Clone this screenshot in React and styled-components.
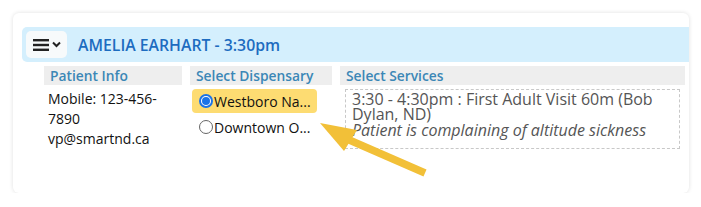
import styled, { createGlobalStyle } from "styled-components";

const GlobalStyle = createGlobalStyle`
  body {
    margin: 0;
    background: #ffffff;
    font-family: "Open Sans", "Liberation Sans", sans-serif;
  }
`;

const Card = styled.div`
  position: relative;
  box-sizing: border-box;
  margin: 13px 0 0 13px;
  width: 676px;
  height: 180px;
  padding: 14px 0 0 9px;
  background: #ffffff;
  border-radius: 6px;
  box-shadow: 0 0 4px rgba(0, 0, 0, 0.13);
`;

const HeaderBar = styled.div`
  display: flex;
  align-items: center;
  gap: 11px;
  height: 35px;
  padding-left: 4px;
  background: #d4effd;
  border-radius: 5px 0 0 5px;
`;

const MenuButton = styled.div`
  display: flex;
  align-items: center;
  justify-content: center;
  gap: 3px;
  width: 41px;
  height: 27px;
  background: #f7fafb;
  border-radius: 5px;
  color: #222;
`;

const Title = styled.div`
  font-size: 15.8px;
  font-weight: 600;
  color: #1d6cc0;
`;

const Columns = styled.div`
  display: grid;
  grid-template-columns: 138px 142px 345px;
  gap: 8px;
  margin-top: 4px;
  padding-left: 22px;
`;

const Column = styled.div`
  display: flex;
  flex-direction: column;
  gap: 4px;
`;

const ColHead = styled.div`
  height: 19px;
  line-height: 19px;
  padding-left: 6px;
  background: #eeeeee;
  color: #3b87b6;
  font-size: 13.8px;
  font-weight: 600;
`;

const InfoText = styled.div`
  padding-left: 4px;
  width: 118px;
  font-size: 14px;
  line-height: 20px;
  color: #111;
`;

const RadioRow = styled.label`
  display: flex;
  align-items: center;
  width: 125px;
  height: 24px;
  margin-left: 2px;
  margin-bottom: 2px;
  padding-left: 7px;
  box-sizing: border-box;
  border-radius: 4px;
  background: ${(p) => (p.selected ? "#fddc72" : "transparent")};
  font-size: 14px;
  color: #111;
  white-space: nowrap;
`;

const RadioDot = styled.span`
  box-sizing: border-box;
  width: 14px;
  height: 14px;
  border-radius: 50%;
  border: ${(p) => (p.checked ? "2px solid #1a73e8" : "1px solid #666")};
  background: #fff;
  display: flex;
  align-items: center;
  justify-content: center;
  margin-right: 1px;
  &::after {
    content: "";
    display: ${(p) => (p.checked ? "block" : "none")};
    width: 8px;
    height: 8px;
    border-radius: 50%;
    background: #1a73e8;
  }
`;

const ServiceBox = styled.div`
  margin-left: 5px;
  width: 335px;
  height: 60px;
  box-sizing: border-box;
  padding: 2px 6px;
  border: 1px dashed #c8c8c8;
  color: #555;
  font-size: 16px;
  line-height: 15px;
`;

const ServiceLine = styled.div``;

const Note = styled.div`
  font-style: italic;
  line-height: 16px;
`;

const Arrow = styled.svg`
  position: absolute;
  left: 287px;
  top: 87px;
`;

const Hamburger = () => (
  <svg width="16" height="14" viewBox="0 0 16 14">
    <rect x="0" y="1" width="16" height="2.4" fill="#222" />
    <rect x="0" y="5.8" width="16" height="2.4" fill="#222" />
    <rect x="0" y="10.6" width="16" height="2.4" fill="#222" />
  </svg>
);

const Chevron = () => (
  <svg width="9" height="7" viewBox="0 0 9 7">
    <path d="M1 1.5 L4.5 5 L8 1.5" fill="none" stroke="#222" strokeWidth="2" />
  </svg>
);

export default function App() {
  return (
    <>
      <GlobalStyle />
      <Card>
        <HeaderBar>
          <MenuButton>
            <Hamburger />
            <Chevron />
          </MenuButton>
          <Title>AMELIA EARHART - 3:30pm</Title>
        </HeaderBar>
        <Columns>
          <Column>
            <ColHead>Patient Info</ColHead>
            <InfoText>
              Mobile: 123-456-7890
              <br />
              vp@smartnd.ca
            </InfoText>
          </Column>
          <Column>
            <ColHead>Select Dispensary</ColHead>
            <div>
              <RadioRow selected>
                <RadioDot checked />
                Westboro Na...
              </RadioRow>
              <RadioRow>
                <RadioDot />
                Downtown O...
              </RadioRow>
            </div>
          </Column>
          <Column>
            <ColHead>Select Services</ColHead>
            <ServiceBox>
              <ServiceLine>3:30 - 4:30pm : First Adult Visit 60m (Bob Dylan, ND)</ServiceLine>
              <Note>Patient is complaining of altitude sickness</Note>
            </ServiceBox>
          </Column>
        </Columns>
        <Arrow width="140" height="90" viewBox="0 0 140 90">
          <line x1="47" y1="39" x2="125" y2="73" stroke="#f2c038" strokeWidth="7.5" />
          <polygon points="20,23 57,30 44,51" fill="#f2c038" />
        </Arrow>
      </Card>
    </>
  );
}
